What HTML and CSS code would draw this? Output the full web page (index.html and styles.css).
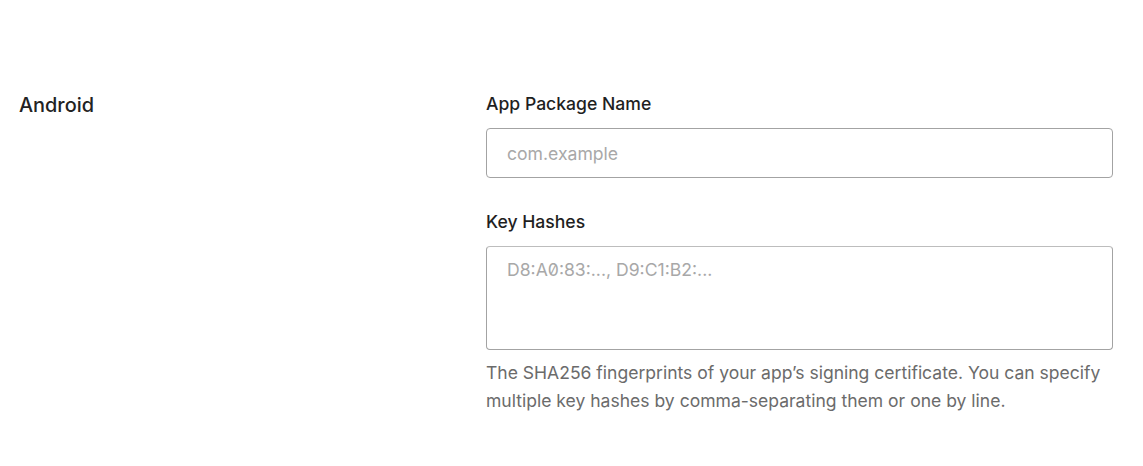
FILE: index.html
```html
<!DOCTYPE html>
<html lang="en">
<head>
<meta charset="utf-8">
<title>Android settings</title>
<link rel="stylesheet" href="styles.css">
</head>
<body>
<section class="platform">
  <h2 class="platform-title">Android</h2>
  <div class="fields">
    <div class="field">
      <label class="field-label" for="pkg">App Package Name</label>
      <input class="text-input" id="pkg" type="text" placeholder="com.example">
    </div>
    <div class="field">
      <label class="field-label" for="hashes">Key Hashes</label>
      <textarea class="text-area" id="hashes" placeholder="D8:A0:83:..., D9:C1:B2:..."></textarea>
      <p class="help">The SHA256 fingerprints of your app’s signing certificate. You can specify multiple key hashes by comma-separating them or one by line.</p>
    </div>
  </div>
</section>
</body>
</html>
```
FILE: styles.css
```css
* { box-sizing: border-box; }
html, body { margin: 0; background: #fff; }
body {
  font-family: Inter, "Noto Sans", sans-serif;
  color: #1f1f1f;
}
.platform {
  display: grid;
  grid-template-columns: 467px 627px;
  padding: 91px 30px 0 19px;
}
.platform-title {
  margin: 1px 0 0;
  font-size: 19.9px;
  font-weight: 500;
  line-height: 26px;
  color: #222;
}
.fields {
  display: flex;
  flex-direction: column;
  gap: 31px;
}
.field {
  display: flex;
  flex-direction: column;
}
.field-label {
  font-size: 17.6px;
  font-weight: 500;
  line-height: 25px;
  margin-bottom: 12px;
}
.text-input, .text-area {
  font-family: Inter, "Noto Sans", sans-serif;
  font-size: 17.6px;
  color: #1f1f1f;
  border: 1px solid #a3a3a3;
  border-radius: 4px;
  background: #fff;
  width: 100%;
  margin: 0;
  outline: none;
}
.text-input {
  height: 50px;
  padding: 0 20px;
}
.text-area {
  height: 104px;
  padding: 11px 20px;
  line-height: 24px;
  resize: none;
  font-variant-numeric: slashed-zero;
  border-top-color: #bdbdbd;
}
.text-input::placeholder, .text-area::placeholder {
  color: #a8a8a8;
  opacity: 1;
}
.help {
  margin: 9px 0 0;
  font-size: 17.55px;
  line-height: 28px;
  color: #6b6b6b;
}
```
